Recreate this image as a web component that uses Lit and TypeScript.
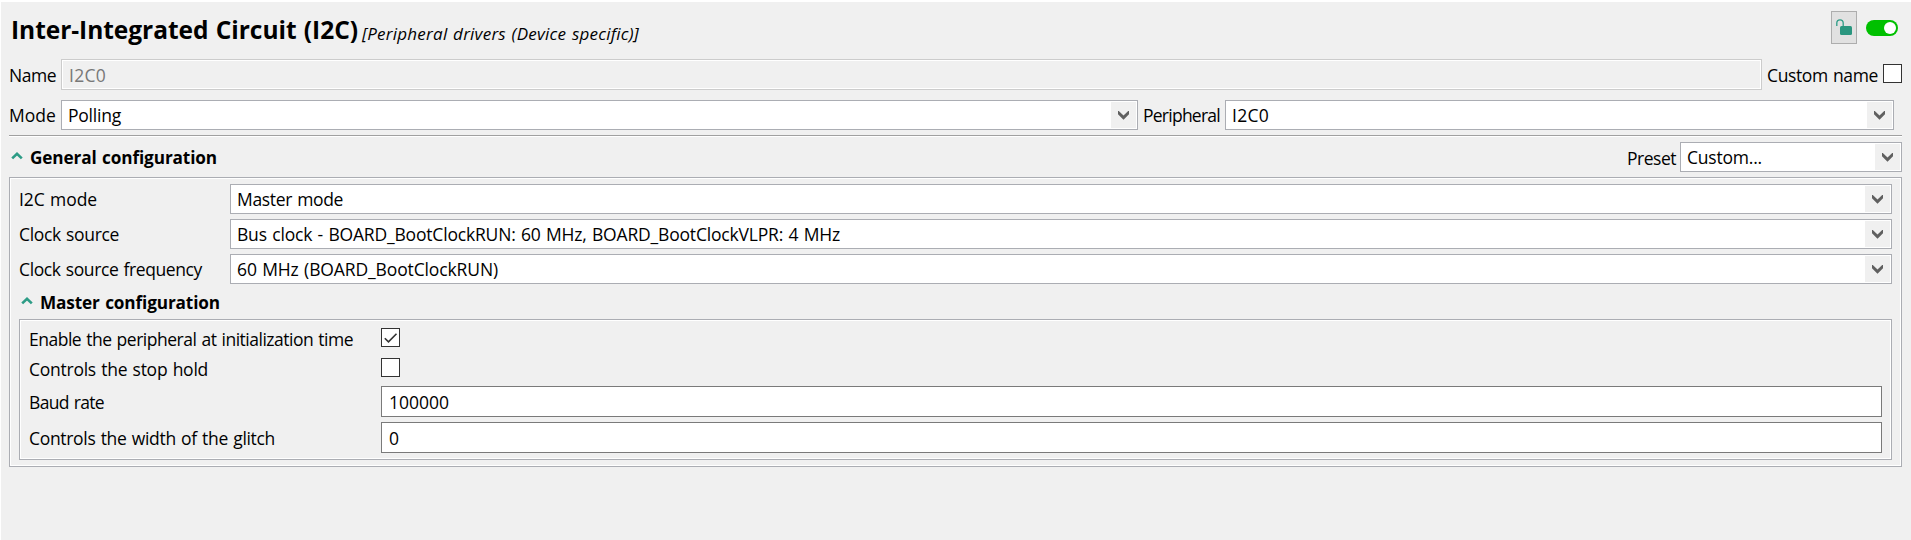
import { LitElement, html, css, svg } from "lit";
import { customElement, property } from "lit/decorators.js";

/** One line of text whose tracking is adjusted so that it fills a given width. */
@customElement("fit-text")
class FitText extends LitElement {
  @property({ type: Number }) w = 0;
  @property() text = "";
  static styles = css`
    :host { display: block; flex: none; white-space: pre; word-spacing: 1px; }
    .t { display: inline-block; }
  `;
  render() {
    return html`<span class="t">${this.text}</span>`;
  }
  updated() {
    const t = this.renderRoot.querySelector(".t") as HTMLElement;
    t.style.letterSpacing = "0px";
    const natural = t.getBoundingClientRect().width;
    t.style.letterSpacing = (this.w - natural) / this.text.length + "px";
    this.style.width = this.w + "px";
  }
}

@customElement("combo-box")
class ComboBox extends LitElement {
  @property() value = "";
  @property({ type: Number }) w = 0;
  static styles = css`
    :host {
      display: flex; box-sizing: border-box; height: 30px; min-width: 0;
      border: 1px solid #abadb3; background: #fff; padding: 1px 1px 1px 6px;
      align-items: center; justify-content: space-between;
    }
    .btn { width: 25px; height: 26px; background: #f0f0f0; flex: none; }
    svg { display: block; }
  `;
  render() {
    return html`<fit-text .text=${this.value} .w=${this.w}></fit-text>
      <div class="btn">
        <svg width="25" height="26" viewBox="0 0 25 26">
          <path d="M7 9v3.2l5.5 5.5 5.5-5.5V9h-.8l-4.7 4.6L7.8 9z" fill="#606060" />
        </svg>
      </div>`;
  }
}

@customElement("check-box")
class CheckBox extends LitElement {
  @property({ type: Boolean }) checked = false;
  static styles = css`
    :host {
      display: block; box-sizing: border-box; width: 19px; height: 19px; flex: none;
      border: 1px solid #333; background: #fff;
    }
    svg { display: block; }
  `;
  render() {
    return html`<svg width="17" height="17" viewBox="0 0 17 17">
      ${this.checked
        ? svg`<path d="M2.8 9.2l3.7 3.7 8-8.2" fill="none" stroke="#333" stroke-width="1.6" />`
        : null}
    </svg>`;
  }
}

const caret = html`<svg width="12" height="9" viewBox="0 0 12 9">
  <path d="M1.2 7.4L6 2.7 10.8 7.4" fill="none" stroke="#2d9c86" stroke-width="2.6" />
</svg>`;

const T = (text: string, w: number, cls = "") =>
  html`<fit-text class=${cls} .text=${text} .w=${w}></fit-text>`;

@customElement("app-root")
class AppRoot extends LitElement {
  static styles = css`
    :host {
      display: block; box-sizing: border-box; height: 540px; overflow: hidden;
      border-top: 2px solid #fff; border-left: 1px solid #fff;
      background: #f0f0f0; color: #000; padding: 0 9px 0 8px;
      font: 17.5px/24px "Open Sans", "Noto Sans", sans-serif;
    }
    .row { display: flex; align-items: center; }
    .grow { flex: 1; }
    .head { height: 57px; align-items: flex-start; }
    .title { font-size: 24.5px; line-height: 34px; font-weight: 700; margin: 11px 0 0 2px; }
    .sub { font-style: italic; font-size: 17px; margin: 20px 0 0 4px; }
    .lock {
      box-sizing: border-box; width: 26px; height: 33px; margin: 9px 9px 0 0;
      border: 1px solid #adadad; background: #e1e1e1;
    }
    .toggle { margin: 18px 4px 0 0; }
    svg { display: block; }
    .name { height: 31px; }
    .name .field {
      flex: 1; box-sizing: border-box; height: 31px; margin: 0 5px 0 5px;
      border: 1px solid #ccc; box-shadow: inset 0 0 0 1px #fff;
      display: flex; align-items: center; padding-left: 7px; color: #787878;
    }
    .name check-box { margin: 0 0 2px 5px; }
    .mode { margin-top: 10px; padding-right: 8px; }
    .c-mode { width: 1077px; margin: 0 5px; }
    .c-per { width: 669px; margin-left: 5px; }
    .rule { height: 1px; background: #a0a0a0; border-bottom: 1px solid #fff; margin-top: 5px; }
    .section { margin-top: 5px; height: 30px; }
    .section svg { margin: 0 7px 4px 2px; }
    .bold { font-weight: 700; font-size: 17.2px; }
    .section .bold { margin-top: 2px; }
    .section .preset-label { margin-top: 1px; }
    .preset { width: 222px; margin-left: 4px; }
    .group {
      box-sizing: border-box; border: 1px solid #abadb3; box-shadow: inset 0 0 0 1px #fff;
    }
    .outer { margin-top: 5px; height: 290px; padding: 6px 9px 0; }
    .inner { height: 141px; padding: 8px 9px 0; }
    .pair { display: grid; grid-template-columns: 211px 1fr; align-items: center; margin-bottom: 5px; }
    .sub-section { height: 30px; }
    .sub-section svg { margin: 0 7px 7px 2px; }
    .sub-section .bold { margin-bottom: 2px; }
    .inner .pair { grid-template-columns: 352px 1fr; }
    .inner .check { height: 19px; margin-bottom: 11px; align-items: start; }
    .inner .check fit-text { margin-top: 2px; line-height: 19px; }
    .inner .check.last { margin-bottom: 9px; }
    .input {
      box-sizing: border-box; height: 31px; border: 1px solid #7a7a7a; background: #fff;
      display: flex; align-items: center; padding-left: 7px;
    }
  `;

  render() {
    return html`
      <div class="row head">
        ${T("Inter-Integrated Circuit (I2C)", 347, "title")}
        ${T("[Peripheral drivers (Device specific)]", 277, "sub")}
        <div class="grow"></div>
        <div class="lock">
          <svg width="24" height="31" viewBox="0 0 24 31">
            <path d="M4.8 14V11q0-3.2 3.2-3.2T11.2 11v4" fill="none" stroke="#2d9c86" stroke-width="1.3" />
            <rect x="8" y="14" width="12" height="9" rx="1.5" fill="#2a967f" />
          </svg>
        </div>
        <svg class="toggle" width="32" height="16" viewBox="0 0 32 16">
          <rect width="32" height="16" rx="8" fill="#00c000" />
          <circle cx="24" cy="8" r="6" fill="#fff" />
        </svg>
      </div>
      <div class="row name">
        ${T("Name", 47)}
        <div class="field">${T("I2C0", 37)}</div>
        ${T("Custom name", 111)}<check-box></check-box>
      </div>
      <div class="row mode">
        ${T("Mode", 47)}
        <combo-box class="c-mode" value="Polling" .w=${53}></combo-box>
        ${T("Peripheral", 77)}
        <combo-box class="c-per" value="I2C0" .w=${37}></combo-box>
      </div>
      <div class="rule"></div>
      <div class="row section">
        ${caret}${T("General configuration", 187, "bold")}
        <div class="grow"></div>
        ${T("Preset", 49, "preset-label")}
        <combo-box class="preset" value="Custom..." .w=${75}></combo-box>
      </div>
      <div class="group outer">
        <div class="pair">${T("I2C mode", 78)}<combo-box value="Master mode" .w=${106}></combo-box></div>
        <div class="pair">
          ${T("Clock source", 100)}
          <combo-box value="Bus clock - BOARD_BootClockRUN: 60 MHz, BOARD_BootClockVLPR: 4 MHz" .w=${603}></combo-box>
        </div>
        <div class="pair">
          ${T("Clock source frequency", 183)}
          <combo-box value="60 MHz (BOARD_BootClockRUN)" .w=${261}></combo-box>
        </div>
        <div class="row sub-section">${caret}${T("Master configuration", 180, "bold")}</div>
        <div class="group inner">
          <div class="pair check">
            ${T("Enable the peripheral at initialization time", 324)}<check-box checked></check-box>
          </div>
          <div class="pair check last">${T("Controls the stop hold", 179)}<check-box></check-box></div>
          <div class="pair">${T("Baud rate", 75)}<div class="input">${T("100000", 60)}</div></div>
          <div class="pair">
            ${T("Controls the width of the glitch", 246)}<div class="input">${T("0", 10)}</div>
          </div>
        </div>
      </div>
    `;
  }
}
